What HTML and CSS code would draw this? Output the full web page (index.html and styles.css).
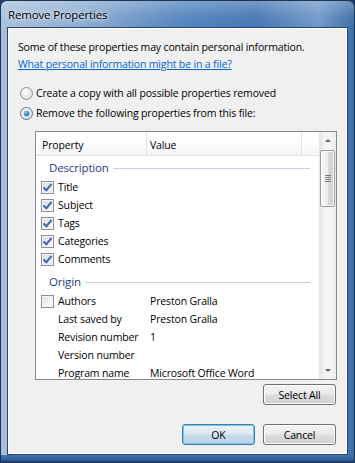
FILE: index.html
```html
<html lang="en">
<head>
  <meta charset="UTF-8">
  <title>Remove Properties</title>
  <link rel="stylesheet" href="styles.css">
</head>
<body>

  <div class="window">
    <div class="titlebar"><span class="title">Remove Properties</span></div>

    <div class="panel">
      <p class="intro">Some of these properties may contain personal information.</p>
      <a class="help-link" href="#">What personal information might be in a file?</a>

      <div class="options">
        <label class="option"><span class="radio"></span>Create a copy with all possible properties removed</label>
        <label class="option"><span class="radio checked"></span>Remove the following properties from this file:</label>
      </div>

      <div class="listbox">
        <div class="list-main">
          <div class="list-header">
            <span class="col-prop">Property</span>
            <span class="col-val">Value</span>
            <span class="col-rest"></span>
          </div>
          <div class="list-body">
            <div class="group"><span>Description</span></div>
            <div class="row"><span class="check on"></span><span class="prop">Title</span></div>
            <div class="row"><span class="check on"></span><span class="prop">Subject</span></div>
            <div class="row"><span class="check on"></span><span class="prop">Tags</span></div>
            <div class="row"><span class="check on"></span><span class="prop">Categories</span></div>
            <div class="row"><span class="check on"></span><span class="prop">Comments</span></div>
            <div class="group origin"><span>Origin</span></div>
            <div class="row"><span class="check"></span><span class="prop">Authors</span><span class="val">Preston Gralla</span></div>
            <div class="row"><span class="nocheck"></span><span class="prop">Last saved by</span><span class="val">Preston Gralla</span></div>
            <div class="row"><span class="nocheck"></span><span class="prop">Revision number</span><span class="val">1</span></div>
            <div class="row"><span class="nocheck"></span><span class="prop">Version number</span><span class="val"></span></div>
            <div class="row"><span class="nocheck"></span><span class="prop">Program name</span><span class="val">Microsoft Office Word</span></div>
          </div>
        </div>
        <div class="scrollbar">
          <div class="arrow up"></div>
          <div class="track">
            <div class="thumb"><span class="grip"></span></div>
          </div>
          <div class="arrow down"></div>
        </div>
      </div>

      <div class="select-row"><button class="btn">Select All</button></div>

      <div class="footer">
        <button class="btn default">OK</button>
        <button class="btn">Cancel</button>
      </div>
    </div>

    <div class="frame-bottom"></div>
  </div>

</body>
</html>
```

FILE: styles.css
```css
body {
  margin: 0;
  font-family: "Open Sans", "Noto Sans", sans-serif;
  font-size: 10.5px;
  letter-spacing: -0.15px;
  color: #000;
  background: #1d3d6b;
}
.window {
  width: 355px;
  height: 463px;
  box-sizing: border-box;
  display: flex;
  flex-direction: column;
  border: 1px solid #1b3558;
  border-radius: 7px 7px 2px 2px;
  background: linear-gradient(90deg, #a9c0dc 0%, #8eadd3 22%, #5284bd 52%, #4676b2 72%, #7099c9 90%, #3e6ea8 100%);
  overflow: hidden;
}
.titlebar {
  height: 26px;
  padding-left: 7px;
  display: flex;
  align-items: center;
  background: linear-gradient(180deg, rgba(255,255,255,0.25) 0%, rgba(255,255,255,0.05) 60%, rgba(0,0,0,0) 100%);
}
.title {
  font-size: 11.5px;
  color: #000;
  text-shadow: 0 0 6px #e8eef6, 0 0 3px #e8eef6;
  padding-top: 1px;
}
.panel {
  flex: 1;
  margin: 0 6px;
  display: flex;
  flex-direction: column;
  background: #f0f0f0;
  border: 1px solid #24466f;
  box-shadow: inset 0 0 0 1px #ffffff;
  padding: 12px 11px 0 10px;
}
.frame-bottom {
  height: 7px;
  background: linear-gradient(180deg, #3f74b0 0%, #2f5f98 70%, #1b3a66 100%);
}
.intro {
  margin: 0;
  line-height: 15px;
}
.help-link {
  margin-top: 2px;
  line-height: 15px;
  color: #0066cc;
  text-decoration: underline;
  align-self: flex-start;
}
.options {
  display: flex;
  flex-direction: column;
  gap: 5px;
  margin-top: 14px;
  padding-left: 2px;
}
.option {
  display: flex;
  align-items: center;
  gap: 3px;
  line-height: 15px;
}
.radio {
  width: 11px;
  height: 11px;
  border-radius: 50%;
  border: 1px solid #8d8d8d;
  background: radial-gradient(circle at 40% 35%, #ffffff 0%, #e9e9e9 55%, #cfcfcf 100%);
  display: flex;
  align-items: center;
  justify-content: center;
}
.radio.checked {
  border-color: #55779e;
}
.radio.checked::after {
  content: "";
  width: 5px;
  height: 5px;
  border-radius: 50%;
  background: radial-gradient(circle at 35% 35%, #8fd0f5 0%, #2b7fc1 55%, #0d4a85 100%);
  box-shadow: 0 0 1px #0d4a85;
}
.listbox {
  margin: 10px 0 0 17px;
  width: 302px;
  height: 249px;
  box-sizing: border-box;
  border: 1px solid #828790;
  background: #fff;
  display: flex;
}
.list-main {
  flex: 1;
  display: flex;
  flex-direction: column;
  overflow: hidden;
}
.list-header {
  height: 24px;
  flex-shrink: 0;
  display: flex;
  align-items: stretch;
  background: linear-gradient(180deg, #ffffff 0%, #ffffff 40%, #f3f4f6 100%);
  border-bottom: 1px solid #e2e3e6;
  box-sizing: border-box;
}
.list-header span {
  display: flex;
  align-items: center;
  box-sizing: border-box;
  padding-top: 2px;
}
.col-prop {
  width: 111px;
  padding-left: 6px;
  border-right: 1px solid #dfe1e5;
}
.col-val {
  width: 155px;
  padding-left: 3px;
  border-right: 1px solid #dfe1e5;
}
.col-rest {
  flex: 1;
}
.list-body {
  flex: 1;
  overflow: hidden;
  padding-top: 1px;
}
.group {
  height: 21px;
  display: flex;
  align-items: center;
  padding: 0 9px 0 13px;
  gap: 4px;
  color: #1e3a8f;
  font-size: 11.5px;
}
.group::after {
  content: "";
  flex: 1;
  height: 1px;
  background: #c6cde0;
  margin-top: 1px;
}
.group.origin {
  margin-top: 3px;
}
.row {
  height: 18px;
  display: flex;
  align-items: center;
  padding-left: 5px;
}
.check, .nocheck {
  width: 13px;
  height: 13px;
  box-sizing: border-box;
  flex-shrink: 0;
  margin-right: 4px;
}
.check {
  border: 1px solid #8f8f8f;
  background: linear-gradient(135deg, #dcdcdc 0%, #f4f4f4 60%, #ffffff 100%);
  box-shadow: inset 0 0 0 1px #f6f6f6;
  position: relative;
}
.check.on {
  background: linear-gradient(135deg, #d6d9e0 0%, #eceef2 60%, #f7f8fa 100%);
}
.check.on::after {
  content: "";
  position: absolute;
  left: 3px;
  top: 0px;
  width: 3px;
  height: 7px;
  border: solid #4866a8;
  border-width: 0 2px 2px 0;
  transform: rotate(40deg);
}
.prop {
  width: 92px;
  flex-shrink: 0;
  white-space: nowrap;
}
.val {
  white-space: nowrap;
}
.scrollbar {
  width: 17px;
  flex-shrink: 0;
  display: flex;
  flex-direction: column;
  background: linear-gradient(90deg, #e6e6e6 0%, #f4f4f4 30%, #f4f4f4 70%, #ececec 100%);
  border-left: 1px solid #e7e7e7;
  box-sizing: border-box;
}
.arrow {
  height: 17px;
  display: flex;
  align-items: center;
  justify-content: center;
}
.arrow::after {
  content: "";
  width: 0;
  height: 0;
  border-left: 3px solid transparent;
  border-right: 3px solid transparent;
}
.arrow.up::after {
  border-bottom: 3px solid #606060;
}
.arrow.down::after {
  border-top: 3px solid #606060;
}
.track {
  flex: 1;
  padding-top: 1px;
}
.thumb {
  margin: 0 1px 0 0;
  height: 57px;
  box-sizing: border-box;
  border: 1px solid #9b9b9b;
  border-radius: 2px;
  background: linear-gradient(90deg, #f6f6f6 0%, #eeeeee 50%, #dadada 51%, #cfcfcf 100%);
  box-shadow: inset 0 0 0 1px #fdfdfd;
  display: flex;
  align-items: center;
  justify-content: center;
}
.grip {
  width: 6px;
  height: 7px;
  background: repeating-linear-gradient(180deg, #7a7a7a 0px, #7a7a7a 1px, transparent 1px, transparent 2px);
}
.select-row {
  display: flex;
  justify-content: flex-end;
  margin-top: 4px;
}
.footer {
  display: flex;
  justify-content: flex-end;
  gap: 8px;
  margin-top: 19px;
}
.btn {
  width: 73px;
  height: 21px;
  font-family: "Open Sans", "Noto Sans", sans-serif;
  font-size: 10.5px;
  letter-spacing: -0.15px;
  color: #000;
  border: 1px solid #707070;
  border-radius: 3px;
  background: linear-gradient(180deg, #f2f2f2 0%, #ebebeb 48%, #dddddd 52%, #cfcfcf 100%);
  box-shadow: inset 0 0 0 1px #fcfcfc;
  padding: 0;
}
.btn.default {
  border-color: #3c7fb1;
  background: linear-gradient(180deg, #eaf2f8 0%, #dde9f2 48%, #c8dbea 52%, #bcd3e6 100%);
  box-shadow: inset 0 0 0 1px #7ec3ea;
}
```
